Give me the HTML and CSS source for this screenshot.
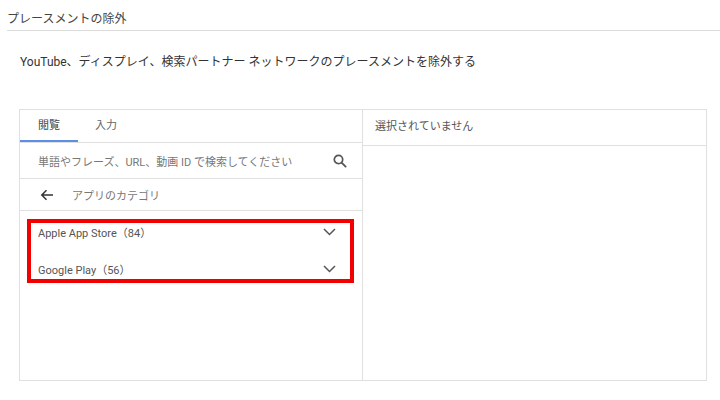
FILE: index.html
```html
<!DOCTYPE html>
<html lang="ja">
<head>
<meta charset="utf-8">
<link rel="stylesheet" href="styles.css">
</head>
<body>
<div class="page">
  <h1 class="title">プレースメントの除外</h1>
  <p class="desc">YouTube、ディスプレイ、検索パートナー ネットワークのプレースメントを除外する</p>
  <div class="picker">
    <div class="left">
      <div class="tabs">
        <div class="tab active">閲覧</div>
        <div class="tab">入力</div>
      </div>
      <div class="search">
        <span class="placeholder">単語やフレーズ、URL、動画 ID で検索してください</span>
        <svg class="icon-search" width="14" height="14" viewBox="0 0 14 14"><circle cx="5.5" cy="5.5" r="4.2" fill="none" stroke="#555" stroke-width="1.7"/><line x1="8.6" y1="8.6" x2="12.6" y2="12.6" stroke="#555" stroke-width="1.9" stroke-linecap="round"/></svg>
      </div>
      <div class="back">
        <svg width="14" height="12" viewBox="0 0 14 12"><path d="M13 6H2M6.5 1.3L1.8 6l4.7 4.7" fill="none" stroke="#333" stroke-width="1.5"/></svg>
        <span>アプリのカテゴリ</span>
      </div>
      <div class="list">
        <div class="highlight">
          <div class="row"><span>Apple App Store（84）</span><svg width="13" height="8" viewBox="0 0 13 8"><path d="M1 1l5.5 5.5L12 1" fill="none" stroke="#555" stroke-width="1.5"/></svg></div>
          <div class="row"><span>Google Play（56）</span><svg width="13" height="8" viewBox="0 0 13 8"><path d="M1 1l5.5 5.5L12 1" fill="none" stroke="#555" stroke-width="1.5"/></svg></div>
        </div>
      </div>
    </div>
    <div class="right">
      <div class="rhead">選択されていません</div>
    </div>
  </div>
</div>
</body>
</html>
```

FILE: styles.css
```css
* { box-sizing: border-box; }
html, body { margin: 0; padding: 0; background: #fff; }
body {
  font-family: Roboto, "Noto Sans CJK JP", sans-serif;
  color: #444;
}
.page { width: 720px; height: 400px; overflow: hidden; }
.title {
  margin: 0 0 0 7px;
  padding: 11px 0 3px;
  font-size: 12px;
  line-height: 16px;
  font-weight: 400;
  color: #444;
  border-bottom: 1px solid #dcdcdc;
}
.desc {
  margin: 22px 0 0 20px;
  font-size: 12px;
  line-height: 18px;
  color: #333;
}
.picker {
  margin: 38px 0 0 19px;
  width: 688px;
  height: 272px;
  border: 1px solid #e0e0e0;
  display: grid;
  grid-template-columns: 343px 343px;
}
.left { border-right: 1px solid #e0e0e0; display: flex; flex-direction: column; }
.tabs {
  display: flex;
  height: 33px;
  border-bottom: 1px solid #e0e0e0;
}
.tab {
  font-size: 11px;
  line-height: 32px;
  color: #666;
  padding: 0 17px;
}
.tab.active {
  width: 58px;
  text-align: center;
  padding: 0;
  color: #444;
  border-bottom: 2px solid #5b8fe6;
  line-height: 32px;
}
.search {
  height: 36px;
  border-bottom: 1px solid #e0e0e0;
  display: flex;
  align-items: center;
  justify-content: space-between;
  padding: 1px 15px 0 18px;
}
.placeholder { font-size: 11px; color: #777; }
.back {
  height: 32px;
  border-bottom: 1px solid #e0e0e0;
  display: flex;
  align-items: center;
  gap: 18px;
  padding-left: 20px;
  font-size: 11px;
  color: #777;
}
.list { flex: 1; padding: 8px 8px 0 7px; }
.highlight {
  border: 4px solid #f20000;
  display: flex;
  flex-direction: column;
  gap: 19px;
  padding-bottom: 1px;
}
.row {
  height: 18px;
  display: flex;
  align-items: center;
  justify-content: space-between;
  padding: 0 14px 0 7px;
  font-size: 11px;
  color: #555;
}
.rhead {
  height: 36px;
  border-bottom: 1px solid #e0e0e0;
  padding: 0 0 0 12px;
  font-size: 11px;
  line-height: 34px;
  color: #555;
}
```
